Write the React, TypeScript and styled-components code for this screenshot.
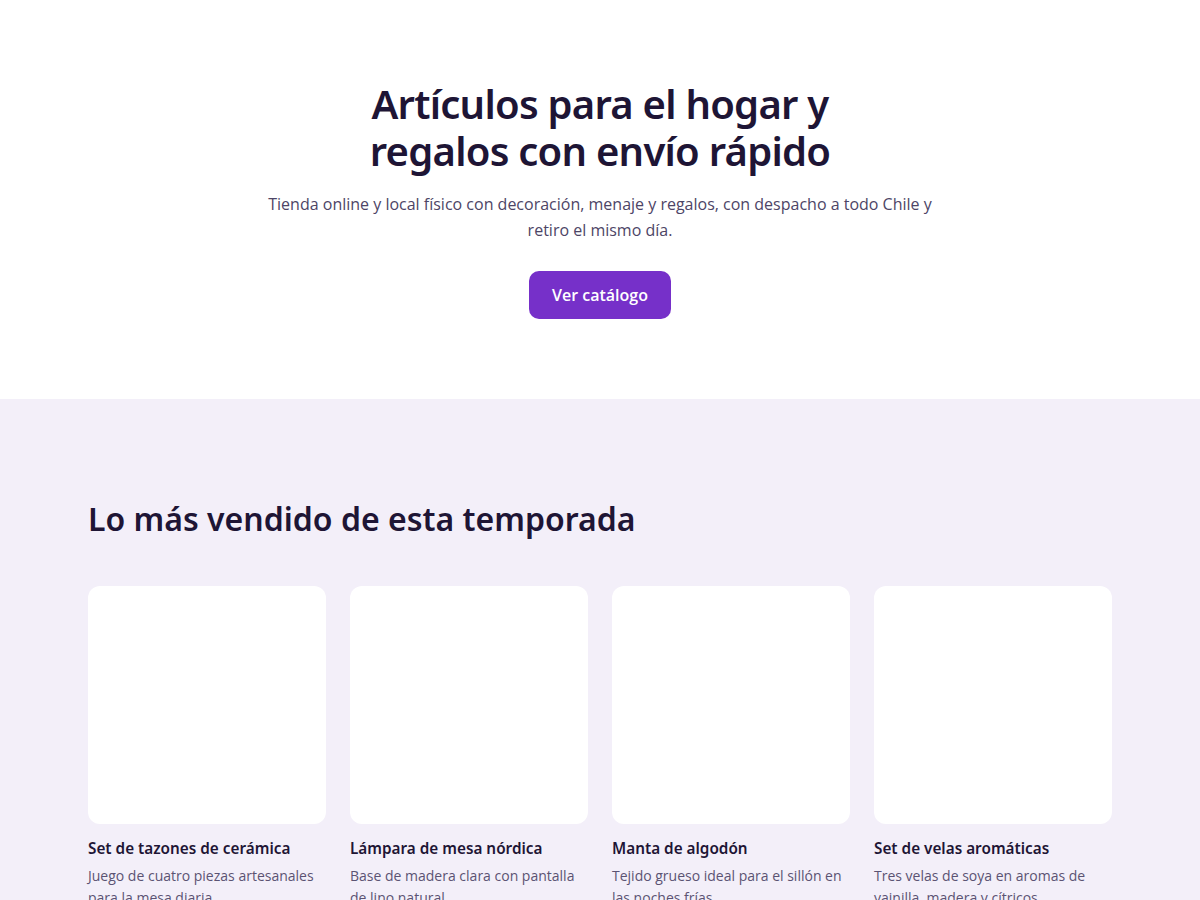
import * as React from 'react';
import styled, { createGlobalStyle } from 'styled-components';

const GlobalStyle = createGlobalStyle`
  * { box-sizing: border-box; }
  body {
    margin: 0;
    background: #ffffff;
    font-family: "Open Sans", "Noto Sans", sans-serif;
    color: #1e1535;
  }
`;

const Hero = styled.section`
  background: #ffffff;
  padding: 80px 24px 80px;
  display: flex;
  flex-direction: column;
  align-items: center;
  text-align: center;
`;

const HeroTitle = styled.h1`
  margin: 0;
  max-width: 480px;
  font-family: "Noto Sans", sans-serif;
  font-weight: 600;
  font-size: 40px;
  line-height: 1.18;
  letter-spacing: -0.75px;
  color: #1e1535;
`;

const HeroText = styled.p`
  margin: 17px 0 0;
  max-width: 680px;
  font-size: 16px;
  line-height: 26px;
  color: #4d4566;
`;

const CtaButton = styled.a`
  margin-top: 28px;
  display: inline-flex;
  align-items: center;
  justify-content: center;
  height: 48px;
  padding: 0 23px;
  border-radius: 10px;
  background: #7630c9;
  color: #ffffff;
  font-size: 16px;
  font-weight: 600;
  text-decoration: none;
`;

const Bestsellers = styled.section`
  background: #f3eff9;
  padding: 101px 88px 80px;
`;

const Inner = styled.div`
  max-width: 1024px;
  margin: 0 auto;
`;

const SectionTitle = styled.h2`
  margin: 0 0 47px;
  font-family: "Noto Sans", sans-serif;
  font-weight: 600;
  font-size: 32px;
  line-height: 1.2;
  color: #1e1535;
`;

const Grid = styled.div`
  display: grid;
  grid-template-columns: repeat(4, 1fr);
  gap: 24px;
`;

const Card = styled.article`
  display: flex;
  flex-direction: column;
`;

const Thumb = styled.div`
  aspect-ratio: 1 / 1;
  background: #ffffff;
  border-radius: 12px;
`;

const CardTitle = styled.h3`
  margin: 12px 0 5px;
  font-family: "Noto Sans", sans-serif;
  font-weight: 600;
  font-size: 15.3px;
  line-height: 24px;
  color: #1e1535;
`;

const CardText = styled.p`
  margin: 0;
  font-size: 14px;
  line-height: 22px;
  color: #5b5373;
`;

const products = [
  { name: 'Set de tazones de cerámica', text: 'Juego de cuatro piezas artesanales para la mesa diaria.' },
  { name: 'Lámpara de mesa nórdica', text: 'Base de madera clara con pantalla de lino natural.' },
  { name: 'Manta de algodón', text: 'Tejido grueso ideal para el sillón en las noches frías.' },
  { name: 'Set de velas aromáticas', text: 'Tres velas de soya en aromas de vainilla, madera y cítricos.' },
];

export default function App() {
  return (
    <>
      <GlobalStyle />
      <Hero>
        <HeroTitle>Artículos para el hogar y regalos con envío rápido</HeroTitle>
        <HeroText>
          Tienda online y local físico con decoración, menaje y regalos, con despacho a todo Chile y retiro el mismo día.
        </HeroText>
        <CtaButton href="#catalogo">Ver catálogo</CtaButton>
      </Hero>
      <Bestsellers>
        <Inner>
          <SectionTitle>Lo más vendido de esta temporada</SectionTitle>
          <Grid>
            {products.map((p) => (
              <Card key={p.name}>
                <Thumb />
                <CardTitle>{p.name}</CardTitle>
                <CardText>{p.text}</CardText>
              </Card>
            ))}
          </Grid>
        </Inner>
      </Bestsellers>
    </>
  );
}
